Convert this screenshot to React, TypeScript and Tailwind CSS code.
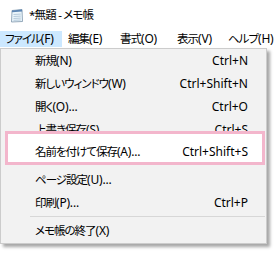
import React from "react";

type Item = { label: string; shortcut?: string; marked?: boolean };

const topItems: Item[] = [
  { label: "新規(N)", shortcut: "Ctrl+N" },
  { label: "新しいウィンドウ(W)", shortcut: "Ctrl+Shift+N" },
  { label: "開く(O)...", shortcut: "Ctrl+O" },
  { label: "上書き保存(S)", shortcut: "Ctrl+S" },
  { label: "名前を付けて保存(A)...", shortcut: "Ctrl+Shift+S", marked: true },
];

const menus = [
  { label: "ファイル(F)", w: "w-[62px] pl-[5px]", active: true },
  { label: "編集(E)", w: "w-[52px] pl-[6px]" },
  { label: "書式(O)", w: "w-[56px] pl-[6px]" },
  { label: "表示(V)", w: "w-[52px] pl-[7px]" },
  { label: "ヘルプ(H)", w: "w-[47px] pl-[6px]" },
];

// the Japanese part gets squeezed a little, the "(X)..." part keeps normal spacing
function Label({ text }: { text: string }) {
  const i = text.indexOf("(");
  if (i < 0) return <span className="tracking-[-1px]">{text}</span>;
  return (
    <span>
      <span className="tracking-[-1px]">{text.slice(0, i)}</span>
      <span className="text-[12px] tracking-[-0.2px]">{text.slice(i)}</span>
    </span>
  );
}

function NotepadIcon() {
  return (
    <svg width="15" height="15" viewBox="0 0 15 15">
      <path d="M3 2.5 L13 1.5 L13.5 13.5 L2.5 14 Z" fill="#eaf5fb" stroke="#7d96ab" strokeWidth="0.8" />
      <path d="M3 2.5 L13 1.5 L13.1 3.6 L3 4.3 Z" fill="#5d86b3" />
      <line x1="4.5" y1="6.5" x2="11.8" y2="6.1" stroke="#9fb8cc" strokeWidth="0.7" />
      <line x1="4.5" y1="8.5" x2="11.8" y2="8.1" stroke="#9fb8cc" strokeWidth="0.7" />
      <line x1="4.5" y1="10.5" x2="11.8" y2="10.1" stroke="#9fb8cc" strokeWidth="0.7" />
      <line x1="4.5" y1="12.3" x2="11.8" y2="12" stroke="#9fb8cc" strokeWidth="0.7" />
    </svg>
  );
}

function MenuRow({ item }: { item: Item }) {
  return (
    <div className={`h-[22.75px] flex items-center pl-[34px] pr-[18px] whitespace-nowrap ${item.marked ? "relative z-20" : ""}`}>
      <span className="flex-1 text-[11.5px]">
        <Label text={item.label} />
      </span>
      {item.shortcut && <span>{item.shortcut}</span>}
    </div>
  );
}

export default function App() {
  return (
    <div className="w-[275px] h-[262px] bg-white overflow-hidden text-[12px] text-black font-['Noto_Sans','Noto_Sans_CJK_JP',sans-serif] [font-feature-settings:'palt']">
      <div className="h-[30px] flex items-center pl-[9px] gap-[5px]">
        <NotepadIcon />
        <span className="text-[11.5px] tracking-[-0.8px]">*無題 - メモ帳</span>
      </div>
      <div className="h-[18px] flex items-start whitespace-nowrap text-[11.5px]">
        {menus.map((m) => (
          <div
            key={m.label}
            className={`${m.w} h-[16px] mt-[1px] flex items-center shrink-0 ${m.active ? "bg-[#cce8ff]" : ""}`}
          >
            <Label text={m.label} />
          </div>
        ))}
      </div>
      <div className="relative w-[267px] border border-[#cccccc] bg-[#f2f2f2] py-[1px] shadow-[3px_3px_3px_rgba(0,0,0,0.35)]">
        <div className="absolute left-[4px] top-[82px] w-[260px] h-[34px] border-[3px] border-[#f3b6cc] bg-white z-10" />
        {topItems.map((it) => (
          <MenuRow key={it.label} item={it} />
        ))}
        <div className="h-[5px]" />
        <MenuRow item={{ label: "ページ設定(U)..." }} />
        <MenuRow item={{ label: "印刷(P)...", shortcut: "Ctrl+P" }} />
        <div className="h-[5px] pt-[2px] pl-[29px] pr-[1px]">
          <div className="h-px bg-[#d7d7d7]" />
        </div>
        <MenuRow item={{ label: "メモ帳の終了(X)" }} />
      </div>
    </div>
  );
}
